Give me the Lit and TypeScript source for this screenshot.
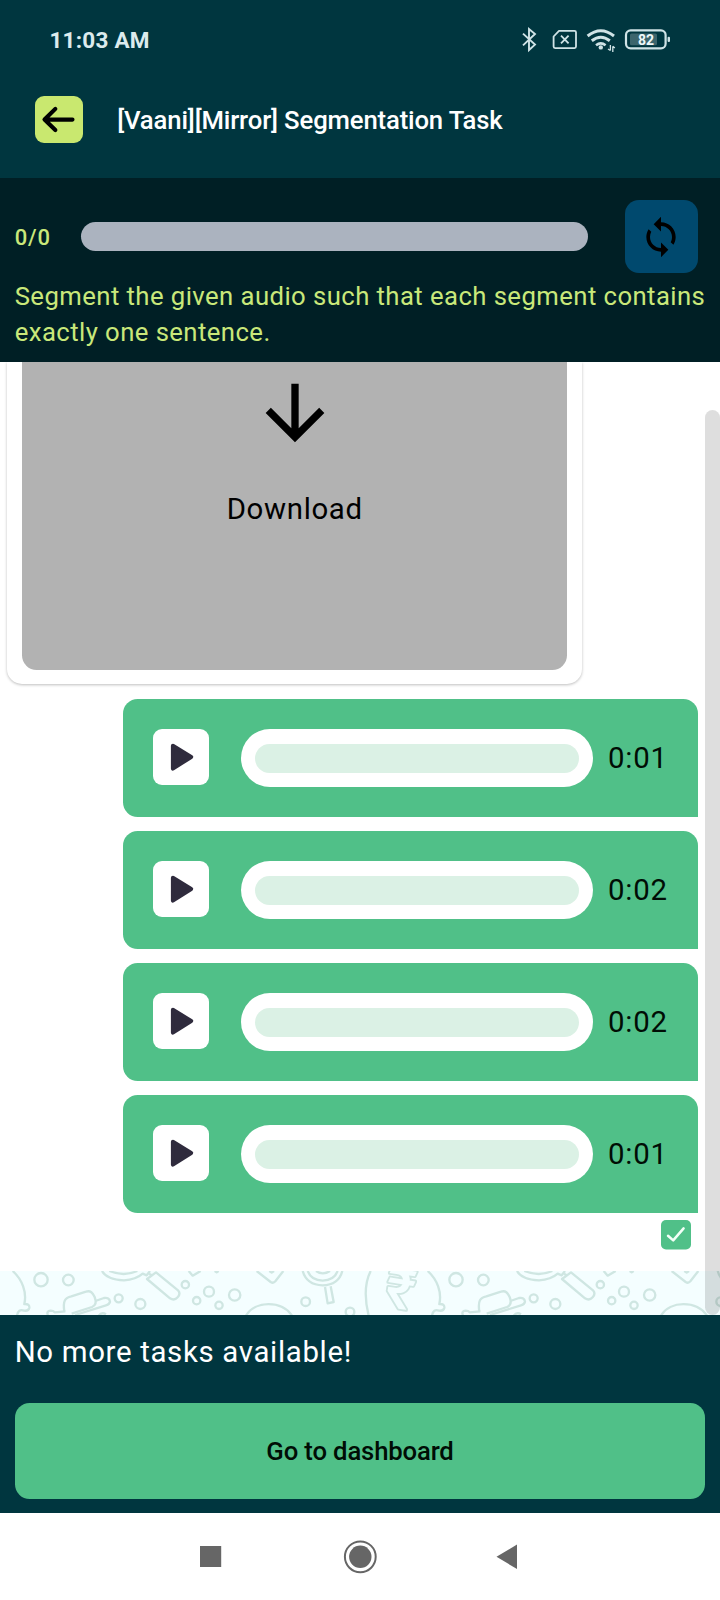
import { LitElement, html, css, svg } from "lit";
import { customElement, property } from "lit/decorators.js";

@customElement("status-bar")
class StatusBar extends LitElement {
  static styles = css`
    :host { display: flex; align-items: center; height: 80px; padding: 0 48px 0 49.4px; box-sizing: border-box; color: #dcebed; }
    .time { flex: 1; font-size: 22.5px; font-weight: 700; line-height: 26px; letter-spacing: 0.25px; }
    .icons { display: block; margin-top: -2px; }
    .level { font: 700 14px Roboto, sans-serif; fill: #eef8f9; }
  `;
  render() {
    return html`
      <span class="time">11:03 AM</span>
      <svg class="icons" width="152" height="30" viewBox="520 24 152 30" fill="none" stroke="#cfe3e6">
        <path d="M523 33.6 L535 44.6 L529 50 V29 L535 34 L523 45.4" stroke-width="1.9" />
        <path d="M559 30.8 H574.5 Q576 30.8 576 32.3 V46.6 Q576 48.1 574.5 48.1 H555.1 Q553.6 48.1 553.6 46.6 V36.5 Z" stroke-width="1.8" stroke-linejoin="round" />
        <path d="M561 35.6 L568.6 43.4 M568.6 35.6 L561 43.4" stroke-width="1.8" />
        <path d="M587.6 36 Q600.8 25.6 614 36" stroke-width="3" />
        <path d="M591.8 40.8 Q600.8 33.8 609.8 40.8" stroke-width="3" />
        <path d="M596 45.2 Q600.8 41.6 605.6 45.2" stroke-width="2.6" />
        <circle cx="600.8" cy="47.4" r="2.2" fill="#cfe3e6" stroke="none" />
        <path d="M610.4 45 V50.5 M608 49 L610.4 50.5 M612.8 52 V46.2 M614.8 48 L612.8 46.2" stroke-width="1.3" />
        <rect x="626" y="30.4" width="39.6" height="18" rx="4.6" stroke-width="2.2" />
        <rect x="630" y="33.6" width="27" height="11.6" rx="1.5" fill="#3c656c" stroke="none" />
        <rect x="667.6" y="36.7" width="2.4" height="5.4" rx="1" fill="#cfe3e6" stroke="none" />
        <text class="level" x="646" y="44.6" text-anchor="middle" stroke="none">82</text>
      </svg>
    `;
  }
}

@customElement("audio-row")
class AudioRow extends LitElement {
  @property() time = "0:00";
  static styles = css`
    :host { display: flex; align-items: flex-start; box-sizing: border-box; width: 575px; height: 117.4px; padding: 29.7px 0 0 29.6px; background: #50c088; border-radius: 14.7px 14.7px 0 14.7px; }
    .play { width: 56.6px; height: 56.6px; border-radius: 9px; background: #fff; }
    .play svg { display: block; }
    .track { box-sizing: border-box; width: 352.5px; height: 58.4px; margin-left: 31.6px; padding: 14.7px; border-radius: 29.4px; background: #fff; }
    .fill { height: 100%; border-radius: 14.7px; background: #dbf1e5; }
    .time { margin-left: 14.6px; font-size: 29.4px; letter-spacing: 0.85px; line-height: 58.6px; color: #000d05; }
  `;
  render() {
    return html`
      <div class="play">
        <svg width="56.6" height="56.6" viewBox="0 0 56.6 56.6">
          <path d="M19.9 16.8 L38.2 28 L19.9 39.6 Z" fill="#2f2b3d" stroke="#2f2b3d" stroke-width="4" stroke-linejoin="round" />
        </svg>
      </div>
      <div class="track"><div class="fill"></div></div>
      <span class="time">${this.time}</span>
    `;
  }
}

@customElement("doodle-strip")
class DoodleStrip extends LitElement {
  static styles = css`
    :host { display: block; height: 44px; background: #f4feff; }
    svg { display: block; }
    .rupee { font: 500 166px Roboto, sans-serif; fill: #f4feff; stroke-width: 11px; paint-order: stroke; }
  `;
  private tile(offset: number) {
    const dots = [
      [123, 26, 20], [205, 27, 16], [356, 82, 12], [421, 99, 15], [556, 41, 11],
      [590, 89, 11], [627, 62, 15], [657, 103, 11], [704, 72, 17], [917, 92, 13], [1050, 123, 13],
    ];
    return svg`<g transform="translate(${offset} 0)">
      ${dots.map(([x, y, r]) => svg`<circle cx=${x} cy=${y} r=${r} />`)}
      <path d="M193 122 C188 88 196 80 214 76 L258 62 C272 57 278 66 284 78 C290 94 286 104 276 108 L215 128" />
      <path d="M286 90 L312 81 Q328 78 330 92 Q329 100 318 103 L225 132" />
      <path d="M144 134 Q138 120 152 119 Q160 119 164 124 L196 121 M296 134 Q305 122 318 130" />
      <path d="M306 0 Q320 26 372 28 Q408 26 428 8 L440 13 L450 0 M328 0 Q372 18 412 0" />
      <path d="M468 4 L534 58 Q543 68 533 79 Q523 90 510 82 L441 24 Z M454 12 L447 8" />
      <path d="M566 0 L578 14 L602 0 M644 0 L650 4 L656 0" />
      <path d="M770 0 L812 33 Q820 38 826 31 L850 0 M808 0 L815 5 L822 0" />
      <path d="M908 0 Q920 42 968 43 Q1016 42 1027 0 M923 0 Q934 28 968 29 Q1002 28 1013 0 M948 0 Q968 14 990 0" />
      <path d="M975 48 L983 97 L1001 93 L992 46" />
      <path d="M738 134 C765 88 845 88 876 134" />
      <path d="M1112 0 C1092 40 1095 90 1106 134 M1283 0 C1312 26 1326 64 1318 99 Q1334 98 1333 110 Q1331 121 1317 119 Q1300 112 1296 134" />
    </g>`;
  }
  render() {
    return html`
      <svg width="720" height="44" viewBox="0 0 2160 132" fill="none" stroke="#cfe6e2" stroke-width="7" stroke-linejoin="round">
        ${[-1245, 0, 1245].map((o) => this.tile(o))}
        <text class="rupee" transform="translate(1150 106) rotate(9)">₹</text>
      </svg>
    `;
  }
}

@customElement("app-root")
class AppRoot extends LitElement {
  static styles = css`
    :host { display: flex; flex-direction: column; position: relative; width: 720px; height: 1600px; overflow: hidden; background: #fff; font-family: Roboto, sans-serif; }
    .header { height: 178px; background: #00363f; }
    .title-row { display: flex; align-items: center; height: 79px; padding-left: 35px; }
    .back { display: block; width: 47.6px; height: 47.6px; border-radius: 9px; background: #c9e86f; }
    .title { margin-left: 34.6px; color: #fff; font-size: 25.7px; font-weight: 500; line-height: 36px; letter-spacing: -0.15px; white-space: nowrap; }
    .progress { box-sizing: border-box; height: 184px; padding: 22px 14.7px 0; background: #001f25; color: #c9e87a; }
    .progress-row { display: flex; align-items: center; height: 73.4px; }
    .count { width: 66px; padding-top: 2px; font-size: 22px; font-weight: 500; letter-spacing: 0.92px; }
    .bar { width: 507.5px; height: 29.4px; border-radius: 14.7px; background: #abb3bf; }
    .refresh { display: flex; align-items: center; justify-content: center; width: 73.4px; height: 73.4px; margin-left: 36.6px; border-radius: 14px; background: #00496e; }
    .hint { margin: 4.3px -10px 0 0; font-size: 25.7px; line-height: 36.7px; letter-spacing: 0.43px; }
    .feed { position: relative; display: flex; flex-direction: column; justify-content: flex-end; height: 953px; overflow: hidden; }
    .messages { box-sizing: border-box; display: flex; flex: 1; flex-direction: column; min-height: 0; padding-right: 22px; }
    .incoming { box-sizing: border-box; width: 575px; height: 322px; margin: 0 0 15.2px 7.4px; padding: 0 15.2px 14.6px 14.8px; border-radius: 0 0 15px 15px; background: #fff; box-shadow: 0 1px 3px rgba(0, 0, 0, 0.26); }
    .download { box-sizing: border-box; display: flex; flex-direction: column; align-items: center; height: 307.6px; padding-top: 7.4px; border-radius: 0 0 14.7px 14.7px; background: #b2b2b2; color: #000; }
    .label { margin-top: 32px; font-size: 29.4px; line-height: 40px; letter-spacing: 0.65px; }
    .outgoing { display: flex; flex-direction: column; align-items: flex-end; gap: 14.6px; }
    .check { display: block; align-self: flex-end; margin: 7px 6.6px 0 0; }
    .thumb { position: absolute; top: 48px; right: 0; bottom: 0; width: 14.6px; border-radius: 7.5px; background: rgba(0, 0, 0, 0.13); }
    .footer { box-sizing: border-box; height: 198px; padding: 15px 14.7px 0; background: #00363f; }
    .notice { color: #fff; font-size: 29.4px; line-height: 44px; letter-spacing: 0.67px; }
    .cta { display: flex; align-items: center; justify-content: center; height: 95.6px; margin-top: 29px; border-radius: 14.7px; background: #50c088; color: #000d05; font-size: 25.7px; font-weight: 500; letter-spacing: -0.15px; }
    .nav { display: block; }
  `;
  render() {
    return html`
      <div class="header">
        <status-bar></status-bar>
        <div class="title-row">
          <svg class="back" viewBox="0 0 48 48" fill="none" stroke="#000" stroke-width="4.2" stroke-linecap="round" stroke-linejoin="round">
            <path d="M37.8 23.8 H10 M20.5 13 L9.6 23.8 L20.5 34.4" />
          </svg>
          <span class="title">[Vaani][Mirror] Segmentation Task</span>
        </div>
      </div>
      <div class="progress">
        <div class="progress-row">
          <span class="count">0/0</span>
          <div class="bar"></div>
          <div class="refresh">
            <svg width="44" height="44" viewBox="0 0 24 24" fill="#000">
              <path d="M12 4V1L8 5l4 4V6c3.31 0 6 2.69 6 6 0 1.01-.25 1.97-.7 2.8l1.46 1.46C19.54 15.03 20 13.57 20 12c0-4.42-3.58-8-8-8zm0 14c-3.31 0-6-2.69-6-6 0-1.01.25-1.97.7-2.8L5.24 7.74C4.46 8.97 4 10.43 4 12c0 4.42 3.58 8 8 8v3l4-4-4-4v3z" />
            </svg>
          </div>
        </div>
        <div class="hint">Segment the given audio such that each segment contains<br />exactly one sentence.</div>
      </div>
      <div class="feed">
        <div class="messages">
          <div class="incoming">
            <div class="download">
              <svg width="88" height="88" viewBox="0 0 24 24"><path d="M20 12l-1.41-1.41L13 16.17V4h-2v12.17l-5.58-5.59L4 12l8 8 8-8z" /></svg>
              <span class="label">Download</span>
            </div>
          </div>
          <div class="outgoing">
            ${["0:01", "0:02", "0:02", "0:01"].map((t) => html`<audio-row .time=${t}></audio-row>`)}
          </div>
          <svg class="check" width="30" height="30" viewBox="0 0 30 30" fill="none">
            <rect width="30" height="29.4" rx="5" fill="#50c088" />
            <path d="M7 15.8 L12.2 20.4 L22.6 8.4" stroke="#f3fff8" stroke-width="2.5" stroke-linecap="round" stroke-linejoin="round" />
          </svg>
        </div>
        <doodle-strip></doodle-strip>
        <div class="thumb"></div>
      </div>
      <div class="footer">
        <div class="notice">No more tasks available!</div>
        <div class="cta">Go to dashboard</div>
      </div>
      <svg class="nav" width="720" height="87" viewBox="0 1513 720 87" fill="#666">
        <rect x="200" y="1546" width="21.2" height="21" />
        <circle cx="360.3" cy="1556.8" r="15.4" fill="none" stroke="#666" stroke-width="2" />
        <circle cx="360.3" cy="1556.8" r="11.2" />
        <path d="M496.5 1556.8 L517 1544.6 V1569 Z" />
      </svg>
    `;
  }
}
